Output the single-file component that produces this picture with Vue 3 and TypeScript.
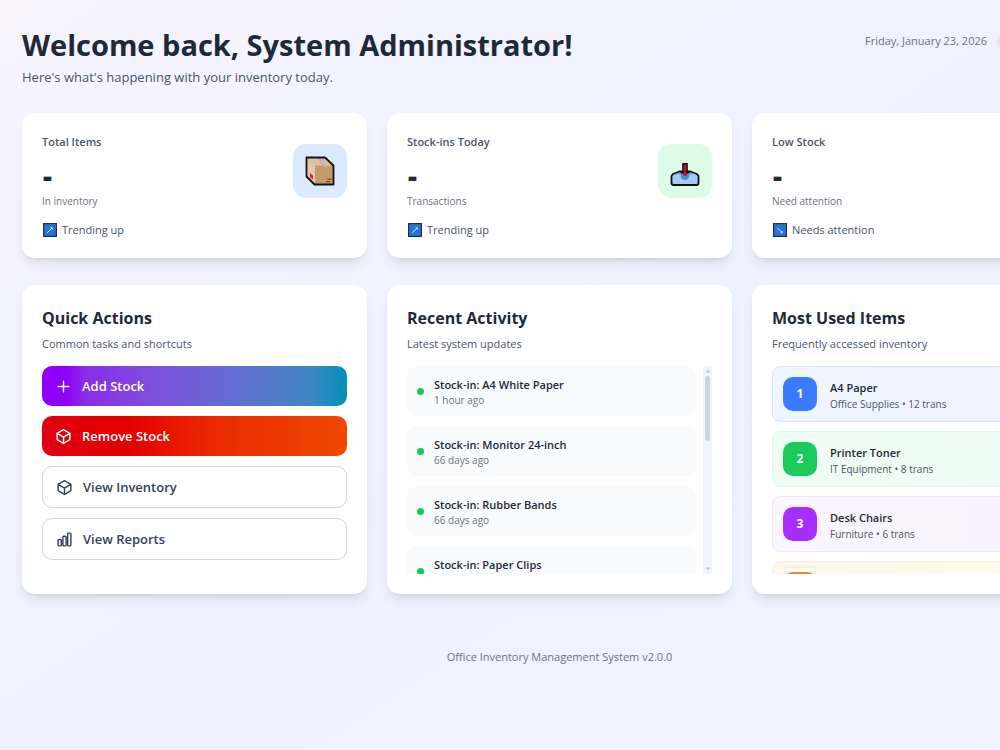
<script setup lang="ts">
interface Stat {
  label: string
  note: string
  trend: string
  up: boolean
  icon?: 'box' | 'inbox'
}

interface Action {
  label: string
  kind: string
  icon: string
}

interface Activity {
  title: string
  when: string
}

interface UsedItem {
  rank: string
  name: string
  detail: string
  tone: string
}

const cube =
  'm21 7.5-9-5.25L3 7.5m18 0-9 5.25m9-5.25v9l-9 5.25M3 7.5l9 5.25M3 7.5v9l9 5.25m0-9v9'
const chart =
  'M3 13.125C3 12.504 3.504 12 4.125 12h2.25c.621 0 1.125.504 1.125 1.125v6.75C7.5 20.496 6.996 21 6.375 21h-2.25A1.125 1.125 0 0 1 3 19.875v-6.75ZM9.75 8.625c0-.621.504-1.125 1.125-1.125h2.25c.621 0 1.125.504 1.125 1.125v11.25c0 .621-.504 1.125-1.125 1.125h-2.25a1.125 1.125 0 0 1-1.125-1.125V8.625ZM16.5 4.125c0-.621.504-1.125 1.125-1.125h2.25C20.496 3 21 3.504 21 4.125v15.75c0 .621-.504 1.125-1.125 1.125h-2.25a1.125 1.125 0 0 1-1.125-1.125V4.125Z'

const stats: Stat[] = [
  { label: 'Total Items', note: 'In inventory', trend: 'Trending up', up: true, icon: 'box' },
  { label: 'Stock-ins Today', note: 'Transactions', trend: 'Trending up', up: true, icon: 'inbox' },
  { label: 'Low Stock', note: 'Need attention', trend: 'Needs attention', up: false },
]

const actions: Action[] = [
  { label: 'Add Stock', kind: 'add', icon: 'M12 4.5v15m7.5-7.5h-15' },
  { label: 'Remove Stock', kind: 'remove', icon: cube },
  { label: 'View Inventory', kind: 'plain', icon: cube },
  { label: 'View Reports', kind: 'plain', icon: chart },
]

const activities: Activity[] = [
  { title: 'Stock-in: A4 White Paper', when: '1 hour ago' },
  { title: 'Stock-in: Monitor 24-inch', when: '66 days ago' },
  { title: 'Stock-in: Rubber Bands', when: '66 days ago' },
  { title: 'Stock-in: Paper Clips', when: '' },
]

const usedItems: UsedItem[] = [
  { rank: '1', name: 'A4 Paper', detail: 'Office Supplies • 12 trans', tone: 'blue' },
  { rank: '2', name: 'Printer Toner', detail: 'IT Equipment • 8 trans', tone: 'green' },
  { rank: '3', name: 'Desk Chairs', detail: 'Furniture • 6 trans', tone: 'purple' },
  { rank: '', name: '', detail: '', tone: 'orange' },
]
</script>

<template>
  <div class="viewport">
    <div class="page">
      <header class="head">
        <div>
          <h1>Welcome back, System Administrator!</h1>
          <p class="lead">Here's what's happening with your inventory today.</p>
        </div>
        <div class="meta">
          <time datetime="2026-01-23">Friday, January 23, 2026</time>
          <span class="role"></span>
        </div>
      </header>

      <main>
        <section class="grid" aria-label="Statistics">
          <article v-for="s in stats" :key="s.label" class="card stat">
            <div>
              <h2 class="stat-label">{{ s.label }}</h2>
              <p class="stat-value">-</p>
              <p class="stat-note">{{ s.note }}</p>
              <p class="trend">
                <svg class="trend-icon" viewBox="0 0 14 14" aria-hidden="true">
                  <rect x=".6" y=".6" width="12.8" height="12.8" fill="#2476d2" stroke="#16263d" stroke-width="1.1" />
                  <path v-if="s.up" d="M4.200 9.800 8.800 5.200M7.500 4.700h1.800V6.500" fill="none" stroke="#d5e7fa" stroke-width="1" />
                  <path v-else d="m4.200 4.700 4.600 4.600M7.500 9.800h1.800V8" fill="none" stroke="#d5e7fa" stroke-width="1" />
                </svg>
                {{ s.trend }}
              </p>
            </div>
            <div v-if="s.icon" class="tile" :class="s.icon">
              <svg v-if="s.icon === 'box'" viewBox="0 0 30 30" aria-hidden="true">
                <path d="M1.500 1.500H20L28.500 9.500V28.500H9.500L1.500 20.500Z" fill="#c49a6c" />
                <path d="M1.500 1.500H20L28.500 9.500H10Z" fill="#e0bf9f" />
                <path d="M1.500 1.500 10 9.500V28.500L1.500 20.500Z" fill="#e5c5ab" />
                <path d="M11.500 1.500H14.500L22 9.500V11H18.500V9.500Z" fill="#b3b7bd" />
                <path d="M5 17 8 19.500V23.500L5 21Z" fill="#d81f35" />
                <path d="M22.500 23.200H26.500M21 25.700H25" stroke="#4a3727" stroke-width="1" />
                <path d="M1.500 1.500H20L28.500 9.500V28.500H9.500L1.500 20.500Z" fill="none" stroke="#121212" stroke-width="1.800" stroke-linejoin="round" />
              </svg>
              <svg v-else viewBox="0 0 30 30" aria-hidden="true">
                <path d="M3 18 9.500 15.500H20.500L27 18 28.500 20V27Q28.500 29 26.500 29H3.500Q1.500 29 1.500 27V20Z" fill="#a3cdf2" stroke="#121212" stroke-width="1.800" stroke-linejoin="round" />
                <path d="M5 18.500 10 16.500H20L25 18.500Z" fill="#5b9fe0" />
                <path d="M10.500 18.500H19.500Q19 24 15 24T10.500 18.500Z" fill="#3f8fdc" />
                <path d="M13 8H17V16.500H19.500L15 20.500 10.500 16.500H13Z" fill="#c5122f" />
                <path d="M10.500 16.500H13V7.800H17V16.500H19.500" fill="none" stroke="#121212" stroke-width="1.600" />
              </svg>
            </div>
          </article>
        </section>

        <section class="grid panels" aria-label="Overview">
          <article class="card panel">
            <h2>Quick Actions</h2>
            <p class="sub">Common tasks and shortcuts</p>
            <div class="actions">
              <button v-for="a in actions" :key="a.label" type="button" class="action" :class="a.kind">
                <svg viewBox="0 0 24 24" aria-hidden="true">
                  <path :d="a.icon" fill="none" stroke="currentColor" stroke-width="2" stroke-linecap="round" stroke-linejoin="round" />
                </svg>
                {{ a.label }}
              </button>
            </div>
          </article>

          <article class="card panel">
            <h2>Recent Activity</h2>
            <p class="sub">Latest system updates</p>
            <div class="scroller">
              <ul class="list activity">
                <li v-for="(a, i) in activities" :key="i">
                  <span class="dot"></span>
                  <div>
                    <p class="name">{{ a.title }}</p>
                    <p class="when">{{ a.when }}</p>
                  </div>
                </li>
              </ul>
              <div class="track" aria-hidden="true">
                <svg viewBox="0 0 8 10"><path d="M4 3.500 6.500 6.500H1.500Z" fill="#c0c7d0" /></svg>
                <span class="thumb"></span>
                <svg viewBox="0 0 8 10"><path d="M4 6.500 6.500 3.500H1.500Z" fill="#c0c7d0" /></svg>
              </div>
            </div>
          </article>

          <article class="card panel">
            <h2>Most Used Items</h2>
            <p class="sub">Frequently accessed inventory</p>
            <ol class="list used">
              <li v-for="u in usedItems" :key="u.tone" :class="u.tone">
                <span class="rank">{{ u.rank }}</span>
                <div class="used-text">
                  <p class="name">{{ u.name }}</p>
                  <p class="detail">{{ u.detail }}</p>
                </div>
              </li>
            </ol>
          </article>
        </section>
      </main>

      <footer>Office Inventory Management System v2.0.0</footer>
    </div>
  </div>
</template>

<style>
body {
  margin: 0;
}
</style>

<style scoped>
.viewport {
  overflow: hidden;
}

.page {
  box-sizing: border-box;
  min-width: 1119px;
  min-height: 100vh;
  padding: 22px;
  background: linear-gradient(to bottom right, #f7f4ff, #eef2ff 50%, #f0f4ff);
  color: #1e2939;
  font-family: "Segoe UI", "Open Sans", "Noto Sans", sans-serif;
  font-size: 12px;
}

h1,
h2,
p,
ul,
ol {
  margin: 0;
  padding: 0;
}

.head {
  display: flex;
  justify-content: space-between;
  align-items: flex-start;
  margin-bottom: 26px;
}

h1 {
  font-size: 29px;
  line-height: 45px;
  font-weight: 660;
}

.lead {
  font-size: 13px;
  line-height: 20px;
  color: #4a5565;
}

.meta {
  display: flex;
  align-items: center;
  gap: 10px;
  padding-top: 8px;
  font-size: 11px;
  line-height: 22px;
  color: #6a7282;
}

.role {
  width: 100px;
  height: 22px;
  border-radius: 11px;
  background: #ffdcdc;
}

.grid {
  display: grid;
  grid-template-columns: repeat(3, 1fr);
  gap: 20px;
}

.panels {
  margin-top: 27px;
}

.card {
  padding: 20px;
  border-radius: 13px;
  background: #fff;
  box-shadow: 0 8px 13px -3px rgb(0 0 0 / 0.1), 0 3px 5px -3px rgb(0 0 0 / 0.1);
}

.stat {
  display: flex;
  justify-content: space-between;
}

.stat-label {
  font-size: 11px;
  line-height: 18px;
  font-weight: 600;
  color: #4a5565;
}

.stat-value {
  margin-top: 9px;
  padding-left: 1px;
  font-size: 28px;
  line-height: 31px;
  font-weight: 800;
}

.stat-note {
  margin-top: 3px;
  font-size: 10px;
  line-height: 14px;
  color: #6a7282;
}

.trend {
  display: flex;
  align-items: center;
  gap: 5px;
  margin-top: 13px;
  padding-left: 1px;
  font-size: 11px;
  line-height: 17px;
  color: #4a5565;
}

.trend-icon {
  width: 14px;
  height: 14px;
}

.tile {
  display: grid;
  place-items: center;
  width: 54px;
  height: 54px;
  margin-top: 11px;
  border-radius: 13px;
}

.tile svg {
  width: 30px;
  height: 30px;
}

.tile.box {
  background: #dbeafe;
}

.tile.inbox {
  background: #dcfce7;
}

.panel h2 {
  font-size: 16px;
  line-height: 26px;
  font-weight: 700;
}

.sub {
  margin: 4px 0 13px;
  font-size: 11px;
  line-height: 18px;
  color: #4a5565;
}

.actions {
  display: grid;
  gap: 10px;
  margin-bottom: 14px;
}

.action {
  display: flex;
  align-items: center;
  gap: 10px;
  padding: 10px 13px;
  border: 0;
  border-radius: 10px;
  font: 600 13px/20px "Segoe UI", "Open Sans", "Noto Sans", sans-serif;
  color: #fff;
  cursor: pointer;
}

.action svg {
  width: 17px;
  height: 17px;
}

.add {
  background: linear-gradient(to right, #9000f8 8%, #8b2ce8 14%, #7a55dc 40%, #5876cc 72%, #3d86c2 88%, #0092b8);
}

.remove {
  background: linear-gradient(to right, #e00010, #e40000 28%, #e92800 55%, #f04800);
}

.plain {
  border: 1px solid #d1d5dc;
  background: #fff;
  color: #364153;
}

.list {
  list-style: none;
  height: 208px;
  overflow-y: auto;
  scrollbar-width: none;
}

.list li {
  display: flex;
  align-items: center;
  box-sizing: border-box;
}

.scroller {
  display: flex;
  gap: 7px;
}

.activity {
  flex: 1;
}

.activity li {
  gap: 10px;
  height: 50px;
  margin-bottom: 10px;
  padding: 0 10px;
  border-radius: 10px;
  background: #f9fafb;
}

.dot {
  width: 7px;
  height: 7px;
  border-radius: 50%;
  background: #16c95b;
}

.name {
  font-size: 11px;
  line-height: 17px;
  font-weight: 600;
}

.when {
  min-height: 14px;
  font-size: 10px;
  line-height: 14px;
  color: #6a7282;
}

.track {
  display: flex;
  flex-direction: column;
  align-items: center;
  width: 9px;
  background: #f1f5f9;
}

.track svg {
  width: 8px;
  height: 10px;
}

.thumb {
  width: 5px;
  height: 65px;
  margin-bottom: auto;
  border-radius: 3px;
  background: #cbd5e1;
}

.list.used li {
  gap: 13px;
  height: 56px;
  margin-bottom: 9px;
  padding: 0 10px;
  border: 1px solid var(--edge);
  border-radius: 8px;
}

.used-text {
  padding-top: 4px;
}

.rank {
  width: 34px;
  height: 34px;
  border-radius: 10px;
  font-size: 12px;
  line-height: 34px;
  font-weight: 700;
  text-align: center;
  color: #fff;
}

.detail {
  font-size: 10px;
  line-height: 17px;
  color: #4a5565;
}

.blue {
  --edge: #dbe7fa;
  background: linear-gradient(to right, #eff6ff, #eef2ff);
}

.blue .rank {
  background: #3b7bff;
}

.green {
  --edge: #e0f8e9;
  background: linear-gradient(to right, #f0fdf4, #ecfdf5);
}

.green .rank {
  background: #18cb5b;
}

.purple {
  --edge: #eee6fb;
  background: linear-gradient(to right, #faf5ff, #f5f3ff);
}

.purple .rank {
  background: #a62fff;
}

.orange {
  --edge: #fdf0df;
  background: linear-gradient(to right, #fff7ed, #fffbeb);
}

.orange .rank {
  background: #e58a3c;
}

footer {
  margin-top: 54px;
  font-size: 11px;
  line-height: 18px;
  text-align: center;
  color: #6a7282;
}
</style>
